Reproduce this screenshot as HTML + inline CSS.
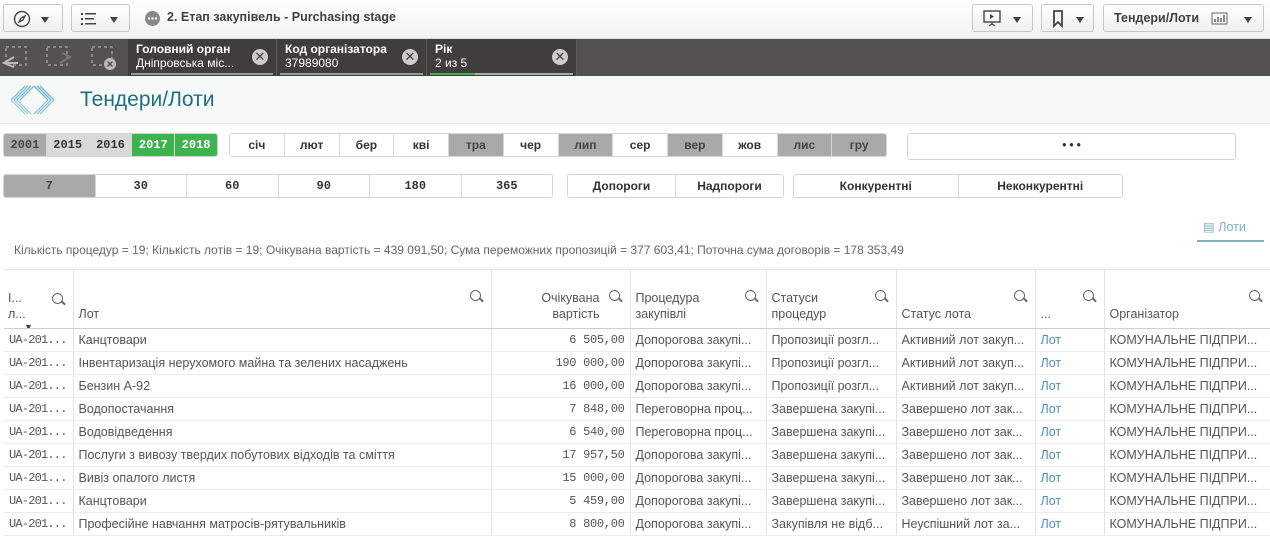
<!DOCTYPE html>
<html><head><meta charset="utf-8"><style>
*{box-sizing:border-box;margin:0;padding:0}
body{width:1270px;height:537px;overflow:hidden;background:#fff;font-family:"Liberation Sans","DejaVu Sans",sans-serif;color:#595959;position:relative}
.a{position:absolute}
.tb{left:0;top:0;width:1270px;height:39px;background:linear-gradient(#fff,#f2f2f2);border-bottom:1px solid #ddd}
.btn{position:absolute;top:4px;height:28px;border:1px solid #c8c8c8;border-radius:3px;background:linear-gradient(#fff,#f0f0f0)}
.tri{position:absolute;width:0;height:0;border-left:4px solid transparent;border-right:4px solid transparent;border-top:6px solid #404040}
.sel{left:0;top:39px;width:1270px;height:37px;background:#545250}
.chip{position:absolute;top:39px;height:37px;background:#3f3e3d;border-right:1px solid #5c5b5a;color:#fff;font-size:12px;padding:3px 0 0 8px;line-height:14px}
.chip b{font-size:12px}
.chip .x{position:absolute;right:8px;top:10px;width:16px;height:16px;border-radius:50%;background:#ccc;color:#3f3e3d;font-size:13px;line-height:16px;text-align:center;font-weight:bold}
.chip .bar{position:absolute;left:3px;right:3px;bottom:1px;height:2px;background:#999}
.hd{left:0;top:76px;width:1270px;height:48px;background:#f7f9f8;border-bottom:1px solid #e6e6e6}
.grp{position:absolute;display:flex;height:24px;border:1px solid #d4d4d4;border-radius:3px;overflow:hidden}
.grp div{flex:1;text-align:center;font:bold 12px/22px "Liberation Mono",monospace;color:#333;border-right:1px solid #d8d8d8;background:#fff}
.grp div:last-child{border-right:0}
.g{background:#a9a9a9!important;color:#444!important}
.l{background:#d9d9d9!important}
.gr{background:#3fb34f!important;color:#fff!important}
.grp2 div{font-family:"Liberation Sans",sans-serif;font-size:12px}
table{position:absolute;left:4px;top:269px;width:1266px;border-collapse:collapse;table-layout:fixed;font-size:12.5px;color:#555}
td,th{border-right:1px solid #e3e3e3;white-space:nowrap;overflow:hidden;padding:0 5px;height:23px;font-weight:normal;text-align:left}
th{height:59px;vertical-align:bottom;padding-bottom:6px;line-height:16px;border-bottom:1px solid #cfcfcf;position:relative;border-top:1px solid #e6e6e6}
td{border-bottom:1px solid #ececec}
.r{text-align:right}
.m{font-family:"Liberation Mono",monospace;font-size:12px;letter-spacing:-.8px}
.r.m{letter-spacing:-.3px}
.lk{color:#4d8fbf}
.q{position:absolute;top:20px;right:10px;width:11px;height:11px;border:1.5px solid #666;border-radius:50%}
.q:after{content:"";position:absolute;left:8px;top:8px;width:5px;height:1.5px;background:#666;transform:rotate(45deg)}
</style></head><body>
<div class="a tb"></div>
<div class="btn" style="left:3px;width:60px"><svg class="a" style="left:9px;top:5px" width="18" height="18" viewBox="0 0 18 18"><circle cx="9" cy="9" r="7.5" fill="none" stroke="#444" stroke-width="1.4"/><path d="M12 6 L8 8 L6 12 L10 10Z" fill="none" stroke="#444" stroke-width="1.3"/></svg><div class="tri" style="left:37px;top:12px"></div></div>
<div class="btn" style="left:71px;width:59px"><svg class="a" style="left:9px;top:7px" width="18" height="14"><g fill="#444"><rect x="0" y="1" width="2" height="2"/><rect x="4" y="1" width="11" height="1.5"/><rect x="0" y="6" width="2" height="2"/><rect x="4" y="6" width="9" height="1.5"/><rect x="0" y="11" width="2" height="2"/><rect x="4" y="11" width="11" height="1.5"/></g></svg><div class="tri" style="left:38px;top:12px"></div></div>
<svg class="a" style="left:145px;top:11px" width="15" height="15"><circle cx="7.5" cy="7.5" r="7.5" fill="#888"/><circle cx="4" cy="7.5" r="1.2" fill="#fff"/><circle cx="7.5" cy="7.5" r="1.2" fill="#fff"/><circle cx="11" cy="7.5" r="1.2" fill="#fff"/></svg>
<div class="a" style="left:167px;top:10px;font-size:12.5px;font-weight:bold;color:#404040">2. Етап закупівель - Purchasing stage</div>
<div class="btn" style="left:972px;width:61px"><svg class="a" style="left:10px;top:5px" width="20" height="18"><rect x="1" y="1" width="16" height="11" fill="none" stroke="#444" stroke-width="1.4"/><path d="M7 4 L11 6.5 L7 9Z" fill="#444"/><path d="M9 12 V15 M6 16 L9 14 L12 16" stroke="#444" stroke-width="1.3" fill="none"/></svg><div class="tri" style="left:40px;top:12px"></div></div>
<div class="btn" style="left:1041px;width:53px"><svg class="a" style="left:10px;top:5px" width="12" height="18"><path d="M2 1 H10 V16 L6 12 L2 16Z" fill="none" stroke="#444" stroke-width="1.8"/></svg><div class="tri" style="left:34px;top:12px"></div></div>
<div class="btn" style="left:1103px;width:161px"><span class="a" style="left:10px;top:6px;font-size:12.5px;font-weight:bold;color:#404040">Тендери/Лоти</span><svg class="a" style="left:107px;top:7px" width="18" height="14"><rect x="1" y="1" width="15" height="11" fill="none" stroke="#666"/><path d="M4 10V7M7 10V5M10 10V6M13 10V3" stroke="#666" stroke-width="1.5"/></svg><div class="tri" style="left:140px;top:12px"></div></div>
<div class="a sel"></div>
<svg class="a" style="left:0;top:43px" width="125" height="30"><g fill="none" stroke="#999" stroke-width="1.5" stroke-dasharray="3 3"><rect x="6" y="4" width="20" height="18"/><rect x="47" y="4" width="20" height="18"/><rect x="92" y="4" width="20" height="18"/></g><path d="M14 14 L4 20 L14 24 M4 20 H18" stroke="#bbb" stroke-width="2" fill="none"/><path d="M60 20 L70 14 L62 10" stroke="#777" stroke-width="2" fill="none"/><circle cx="110" cy="21" r="6" fill="#bbb"/><path d="M107.5 18.5l5 5m0-5l-5 5" stroke="#545250" stroke-width="1.5"/></svg>
<div class="chip" style="left:128px;width:149px"><b>Головний орган</b><br>Дніпровська міс...<div class="x">✕</div><div class="bar"></div></div>
<div class="chip" style="left:277px;width:150px"><b>Код організатора</b><br>37989080<div class="x">✕</div><div class="bar"></div></div>
<div class="chip" style="left:427px;width:150px"><b>Рік</b><br>2 из 5<div class="x">✕</div><div class="bar" style="background:#aaa"></div><div class="a" style="left:3px;bottom:1px;width:45px;height:2px;background:#3fb34f"></div></div>
<div class="a hd"></div>
<svg class="a" style="left:8px;top:84px" width="50" height="32"><g stroke="#4aa6c4" stroke-width="1.3"><path d="M17 2L3 16M20 2L6 16M23 2L9 16M26 2L12 16" opacity=".7"/><path d="M3 16L17 30M6 16L20 30M9 16L23 30" opacity=".5"/><path d="M26 2L40 16M29 2L43 16M32 2L46 16" opacity=".8"/><path d="M40 16L26 30M43 16L29 30M46 16L32 30" opacity=".6"/></g></svg>
<div class="a" style="left:80px;top:88px;font-size:21px;color:#1f6f80">Тендери/Лоти</div>
<div class="grp" style="left:3px;top:133px;width:215px"><div class="g">2001</div><div class="l">2015</div><div class="l">2016</div><div class="gr">2017</div><div class="gr">2018</div></div>
<div class="grp grp2" style="left:229px;top:133px;width:658px"><div>січ</div><div>лют</div><div>бер</div><div>кві</div><div class="g">тра</div><div>чер</div><div class="g">лип</div><div>сер</div><div class="g">вер</div><div>жов</div><div class="g">лис</div><div class="g">гру</div></div>
<div class="grp" style="left:907px;top:133px;width:329px;height:27px"><div style="line-height:25px">•••</div></div>
<div class="grp" style="left:3px;top:174px;width:550px"><div class="g">7</div><div>30</div><div>60</div><div>90</div><div>180</div><div>365</div></div>
<div class="grp grp2" style="left:567px;top:174px;width:217px"><div>Допороги</div><div>Надпороги</div></div>
<div class="grp grp2" style="left:793px;top:174px;width:330px"><div>Конкурентні</div><div>Неконкурентні</div></div>
<div class="a" style="left:1203px;top:219px;font-size:12.5px;color:#7fb0c6">▤ Лоти</div>
<div class="a" style="left:1197px;top:240px;width:67px;height:2px;background:#7fb0c6"></div>
<div class="a" style="left:14px;top:243px;font-size:12px;color:#666">Кількість процедур = 19; Кількість лотів = 19; Очікувана вартість = 439 091,50; Сума переможних пропозицій = 377 603,41; Поточна сума договорів = 178 353,49</div>
<table>
<colgroup><col style="width:69px"><col style="width:418px"><col style="width:139px"><col style="width:136px"><col style="width:130px"><col style="width:139px"><col style="width:69px"><col style="width:166px"></colgroup>
<tr><th style="padding-left:4px">І...<br>л...<span class="q" style="top:23px"></span><span class="a" style="left:20px;bottom:-7px;font-size:9px;color:#444">▼</span></th><th>Лот<span class="q"></span></th><th class="r" style="padding-right:30px">Очікувана<br>вартість<span class="q"></span></th><th>Процедура<br>закупівлі<span class="q"></span></th><th>Статуси<br>процедур<span class="q"></span></th><th>Статус лота<span class="q"></span></th><th>...<span class="q"></span></th><th>Організатор<span class="q"></span></th></tr>
<tr><td class="m">UA-201...</td><td>Канцтовари</td><td class="r m">6 505,00</td><td>Допорогова закупі...</td><td>Пропозиції розгл...</td><td>Активний лот закуп...</td><td class="lk">Лот</td><td>КОМУНАЛЬНЕ ПІДПРИ...</td></tr>
<tr><td class="m">UA-201...</td><td>Інвентаризація нерухомого майна та зелених насаджень</td><td class="r m">190 000,00</td><td>Допорогова закупі...</td><td>Пропозиції розгл...</td><td>Активний лот закуп...</td><td class="lk">Лот</td><td>КОМУНАЛЬНЕ ПІДПРИ...</td></tr>
<tr><td class="m">UA-201...</td><td>Бензин А-92</td><td class="r m">16 000,00</td><td>Допорогова закупі...</td><td>Пропозиції розгл...</td><td>Активний лот закуп...</td><td class="lk">Лот</td><td>КОМУНАЛЬНЕ ПІДПРИ...</td></tr>
<tr><td class="m">UA-201...</td><td>Водопостачання</td><td class="r m">7 848,00</td><td>Переговорна проц...</td><td>Завершена закупі...</td><td>Завершено лот зак...</td><td class="lk">Лот</td><td>КОМУНАЛЬНЕ ПІДПРИ...</td></tr>
<tr><td class="m">UA-201...</td><td>Водовідведення</td><td class="r m">6 540,00</td><td>Переговорна проц...</td><td>Завершена закупі...</td><td>Завершено лот зак...</td><td class="lk">Лот</td><td>КОМУНАЛЬНЕ ПІДПРИ...</td></tr>
<tr><td class="m">UA-201...</td><td>Послуги з вивозу твердих побутових відходів та сміття</td><td class="r m">17 957,50</td><td>Допорогова закупі...</td><td>Завершена закупі...</td><td>Завершено лот зак...</td><td class="lk">Лот</td><td>КОМУНАЛЬНЕ ПІДПРИ...</td></tr>
<tr><td class="m">UA-201...</td><td>Вивіз опалого листя</td><td class="r m">15 000,00</td><td>Допорогова закупі...</td><td>Завершена закупі...</td><td>Завершено лот зак...</td><td class="lk">Лот</td><td>КОМУНАЛЬНЕ ПІДПРИ...</td></tr>
<tr><td class="m">UA-201...</td><td>Канцтовари</td><td class="r m">5 459,00</td><td>Допорогова закупі...</td><td>Завершена закупі...</td><td>Завершено лот зак...</td><td class="lk">Лот</td><td>КОМУНАЛЬНЕ ПІДПРИ...</td></tr>
<tr><td class="m">UA-201...</td><td>Професійне навчання матросів-рятувальників</td><td class="r m">8 800,00</td><td>Допорогова закупі...</td><td>Закупівля не відб...</td><td>Неуспішний лот за...</td><td class="lk">Лот</td><td>КОМУНАЛЬНЕ ПІДПРИ...</td></tr>
</table>
</body></html>
